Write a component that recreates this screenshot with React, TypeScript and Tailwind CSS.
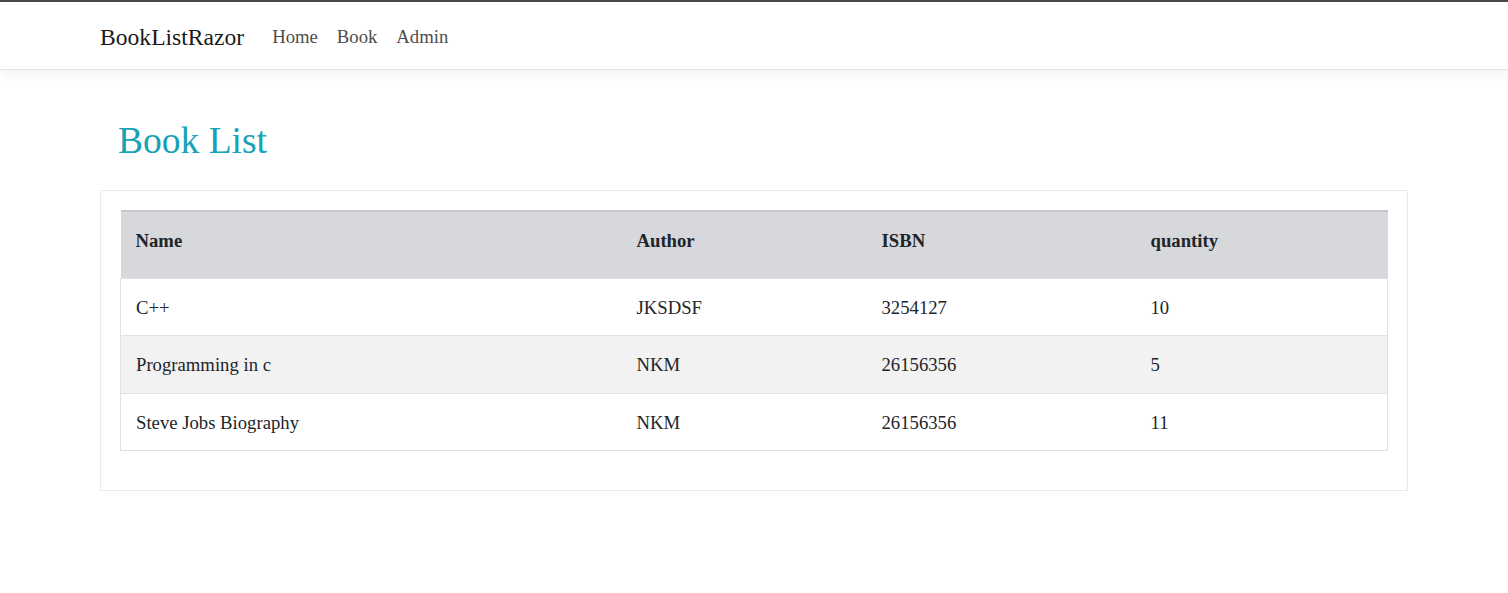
import React from "react";

const rows = [
  { name: "C++", author: "JKSDSF", isbn: "3254127", qty: "10" },
  { name: "Programming in c", author: "NKM", isbn: "26156356", qty: "5" },
  { name: "Steve Jobs Biography", author: "NKM", isbn: "26156356", qty: "11" },
];

export default function App() {
  return (
    <div className="min-h-[593px] bg-white text-[#212529]" style={{ fontFamily: '"Liberation Serif", "Times New Roman", serif' }}>
      <div className="h-[2px] bg-[#4a4a4a]" />
      <nav className="h-[68px] border-b border-[#e3e3e3] bg-white shadow-[0_4px_12px_rgba(0,0,0,0.06)] flex items-center pl-[100px] pt-[4px]">
        <span className="text-[23.6px] text-[#1a1a1a] mr-[28px] leading-none">BookListRazor</span>
        <div className="flex gap-[19px] text-[18.7px] text-[#4d4d4d] leading-none">
          <span>Home</span>
          <span>Book</span>
          <span>Admin</span>
        </div>
      </nav>
      <div className="pl-[118px] pt-[52px] h-[120px]">
        <h1 className="text-[37.5px] leading-none text-[#17a2b8]">Book List</h1>
      </div>
      <div className="ml-[100px] w-[1308px] border border-[#e9eaec] p-[19px] pb-[39px]">
        <table className="w-full border-collapse text-[18.7px]">
          <thead>
            <tr className="bg-[#d6d8db] h-[67px] border-t-2 border-[#c4c7cb]">
              <th className="w-[500px] text-left font-bold pl-[15px] pb-[8px]">Name</th>
              <th className="w-[245px] text-left font-bold pl-[16px] pb-[8px]">Author</th>
              <th className="w-[269px] text-left font-bold pl-[16px] pb-[8px]">ISBN</th>
              <th className="text-left font-bold pl-[16px] pb-[8px]">quantity</th>
            </tr>
          </thead>
          <tbody>
            {rows.map((r, i) => (
              <tr
                key={i}
                className={(i % 2 === 1 ? "bg-[#f2f2f2] " : "bg-white ") + "h-[57.5px] border border-[#dee2e6]"}
              >
                <td className="pl-[15px] pt-[2px]">{r.name}</td>
                <td className="pl-[16px] pt-[2px]">{r.author}</td>
                <td className="pl-[16px] pt-[2px]">{r.isbn}</td>
                <td className="pl-[16px] pt-[2px]">{r.qty}</td>
              </tr>
            ))}
          </tbody>
        </table>
      </div>
    </div>
  );
}
